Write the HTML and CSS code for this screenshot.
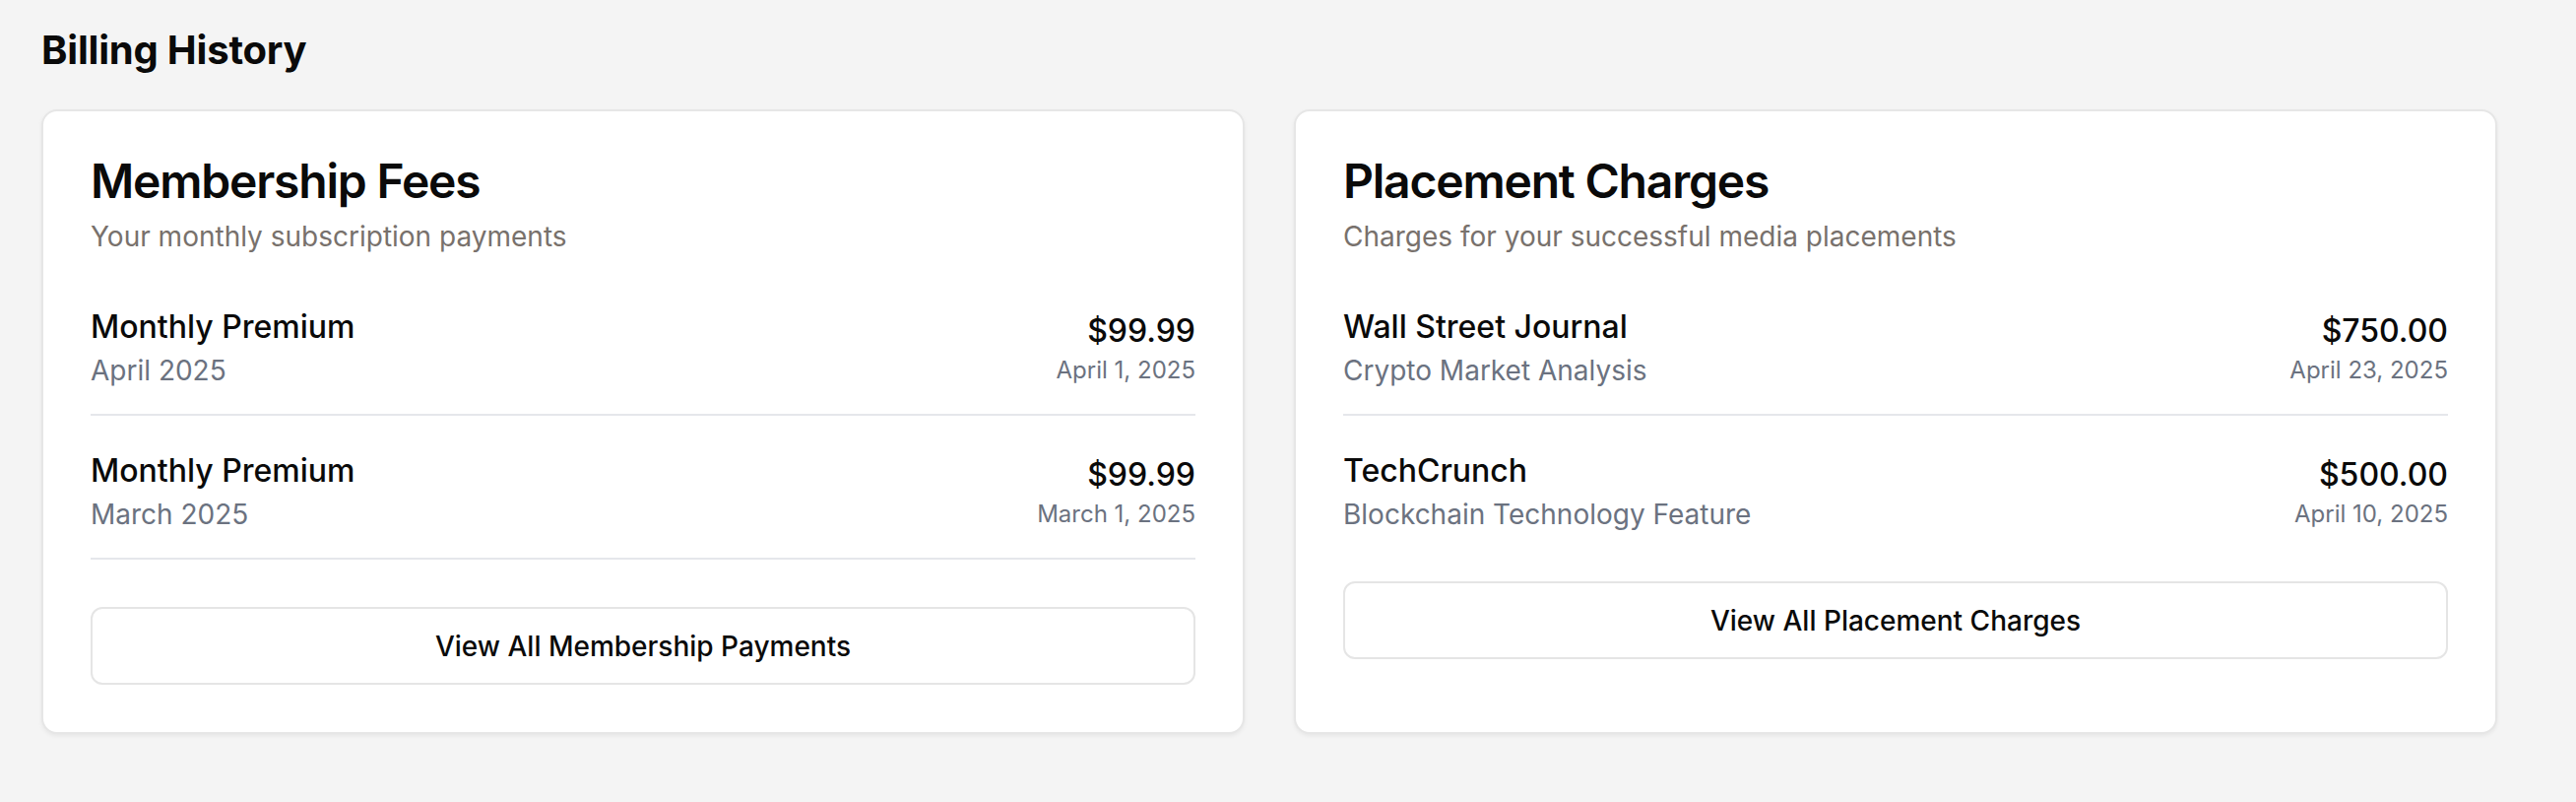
FILE: index.html
```html
<!DOCTYPE html>
<html lang="en">
<head>
<meta charset="utf-8">
<title>Billing History</title>
<link rel="stylesheet" href="styles.css">
</head>
<body>
<main class="page">
  <h1 class="page-title">Billing History</h1>
  <div class="grid">
    <section class="card">
      <header class="card-header">
        <h2 class="card-title">Membership Fees</h2>
        <p class="card-desc">Your monthly subscription payments</p>
      </header>
      <div class="card-content">
        <div class="rows">
          <div class="row">
            <div class="row-left">
              <div class="row-name">Monthly Premium</div>
              <div class="row-sub">April 2025</div>
            </div>
            <div class="row-right">
              <div class="row-amount">$99.99</div>
              <div class="row-date">April 1, 2025</div>
            </div>
          </div>
          <div class="row">
            <div class="row-left">
              <div class="row-name">Monthly Premium</div>
              <div class="row-sub">March 2025</div>
            </div>
            <div class="row-right">
              <div class="row-amount">$99.99</div>
              <div class="row-date">March 1, 2025</div>
            </div>
          </div>
        </div>
        <button class="btn">View All Membership Payments</button>
      </div>
    </section>
    <section class="card">
      <header class="card-header">
        <h2 class="card-title">Placement Charges</h2>
        <p class="card-desc">Charges for your successful media placements</p>
      </header>
      <div class="card-content">
        <div class="rows rows-last-clean">
          <div class="row">
            <div class="row-left">
              <div class="row-name">Wall Street Journal</div>
              <div class="row-sub">Crypto Market Analysis</div>
            </div>
            <div class="row-right">
              <div class="row-amount">$750.00</div>
              <div class="row-date">April 23, 2025</div>
            </div>
          </div>
          <div class="row">
            <div class="row-left">
              <div class="row-name">TechCrunch</div>
              <div class="row-sub">Blockchain Technology Feature</div>
            </div>
            <div class="row-right">
              <div class="row-amount">$500.00</div>
              <div class="row-date">April 10, 2025</div>
            </div>
          </div>
        </div>
        <button class="btn">View All Placement Charges</button>
      </div>
    </section>
  </div>
</main>
</body>
</html>
```

FILE: styles.css
```css
* { box-sizing: border-box; }
html, body {
  margin: 0;
  padding: 0;
  background: #f4f4f4;
}
body {
  font-family: Inter, "Noto Sans", "Liberation Sans", sans-serif;
  color: #0a0a0a;
  min-height: 814px;
}
.page {
  padding: 23px 80px 0 42px;
}
.page-title {
  margin: 0 0 32px 0;
  font-size: 40px;
  line-height: 56px;
  font-weight: 700;
  letter-spacing: -0.2px;
}
.grid {
  display: grid;
  grid-template-columns: 1fr 1fr;
  gap: 50px;
}
.card {
  background: #ffffff;
  border: 2px solid #e6e6e6;
  border-radius: 16px;
  box-shadow: 0 2px 4px rgba(0, 0, 0, 0.06);
  display: flex;
  flex-direction: column;
}
.card-header {
  padding: 47px 48px 48px 48px;
  display: flex;
  flex-direction: column;
  gap: 12px;
}
.card-title {
  margin: 0;
  font-size: 48px;
  line-height: 48px;
  font-weight: 600;
  letter-spacing: -1.2px;
}
.card-desc {
  margin: 0;
  font-size: 28px;
  line-height: 40px;
  color: #78716c;
}
.card-content {
  padding: 0 48px 48px 48px;
}
.rows {
  display: flex;
  flex-direction: column;
  gap: 32px;
}
.row {
  display: flex;
  justify-content: space-between;
  align-items: center;
  padding-bottom: 24px;
  border-bottom: 2px solid #e5e7eb;
}
.rows-last-clean .row:last-child {
  border-bottom: 0;
  padding-bottom: 0;
}
.row-name {
  font-size: 32px;
  line-height: 48px;
  font-weight: 500;
}
.row-sub {
  font-size: 28px;
  line-height: 40px;
  color: #6b7280;
}
.row-right {
  text-align: right;
}
.row-amount {
  font-size: 32px;
  line-height: 48px;
  font-weight: 500;
}
.row-date {
  font-size: 24px;
  line-height: 32px;
  color: #6b7280;
}
.btn {
  display: block;
  width: 100%;
  height: 79px;
  margin-top: 48px;
  background: #ffffff;
  border: 2px solid #e5e5e5;
  border-radius: 12px;
  font-family: inherit;
  font-size: 28px;
  font-weight: 500;
  color: #0a0a0a;
}
```
